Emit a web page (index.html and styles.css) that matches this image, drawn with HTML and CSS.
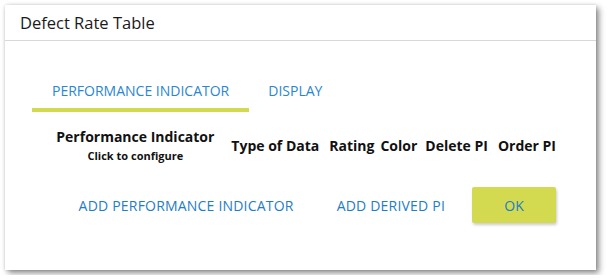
FILE: index.html
```html
<!DOCTYPE html>
<html>
<head>
  <meta charset="UTF-8" />
  <title>Defect Rate Table</title>
  <link rel="stylesheet" href="styles.css">
</head>
<body>
  <div class="dialog">
    <div class="dialog-title">Defect Rate Table</div>

    <div class="dialog-body">
      <div class="tabs">
        <div class="tab active">PERFORMANCE INDICATOR</div>
        <div class="tab">DISPLAY</div>
      </div>

      <div class="pi-header">
        <div class="col col-pi">
          <div>Performance Indicator</div>
          <div class="hint">Click to configure</div>
        </div>
        <div class="col col-type">Type of Data</div>
        <div class="col col-rating">Rating</div>
        <div class="col col-color">Color</div>
        <div class="col col-delete">Delete PI</div>
        <div class="col col-order">Order PI</div>
      </div>

      <div class="actions">
        <button class="flat-btn">ADD PERFORMANCE INDICATOR</button>
        <button class="flat-btn derived">ADD DERIVED PI</button>
        <button class="ok-btn">OK</button>
      </div>
    </div>
  </div>
</body>
</html>
```

FILE: styles.css
```css
body {
  margin: 0;
  background-color: #fff;
  font-family: "Open Sans", Arial, sans-serif;
  color: #111;
}

.dialog {
  margin: 5px;
  width: 591px;
  height: 265px;
  background-color: #fff;
  box-shadow: 3px 3px 6px rgba(0, 0, 0, 0.45), 0 0 3px rgba(0, 0, 0, 0.15);
}

.dialog-title {
  height: 35px;
  padding-left: 15px;
  font-size: 16.5px;
  line-height: 36px;
  color: #1a1a1a;
  border-bottom: 1px solid #d8d8d8;
}

.dialog-body {
  padding: 0 40px 0 27px;
}

/* Tabs */
.tabs {
  display: flex;
  margin-top: 32px;
}

.tab {
  padding: 8px 20px 8px 20px;
  font-size: 14px;
  line-height: 19px;
  color: #2a86d1;
  border-bottom: 4px solid transparent;
}

.tab.active {
  border-bottom-color: #d4da4f;
}

.tab + .tab {
  padding-left: 19px;
}

/* Table header */
.pi-header {
  display: flex;
  align-items: center;
  justify-content: flex-end;
  margin-top: 15px;
  font-size: 14px;
  line-height: 19px;
  font-weight: 700;
}

.col {
  text-align: center;
}

.col-pi {
  width: 180px;
  margin-right: 6px;
}

.hint {
  font-size: 11px;
  line-height: 15px;
  margin-top: 2px;
}

.col-type {
  margin-right: 10px;
}

.col-rating {
  margin-right: 6px;
}

.col-color {
  margin-right: 8px;
}

.col-delete {
  margin-right: 10px;
}

/* Actions */
.actions {
  display: flex;
  align-items: center;
  justify-content: flex-end;
  margin-top: 24px;
}

.flat-btn {
  background: none;
  border: none;
  padding: 0;
  font-family: inherit;
  font-size: 14px;
  letter-spacing: 0.2px;
  color: #1f7cc6;
  cursor: pointer;
}

.flat-btn.derived {
  margin-left: 43px;
  margin-right: 27px;
}

.ok-btn {
  width: 84px;
  height: 36px;
  border: none;
  border-radius: 2px;
  background-color: #d4da4f;
  box-shadow: 1px 2px 3px rgba(0, 0, 0, 0.2);
  font-family: inherit;
  font-size: 14px;
  color: #1f7cc6;
  cursor: pointer;
}
```
